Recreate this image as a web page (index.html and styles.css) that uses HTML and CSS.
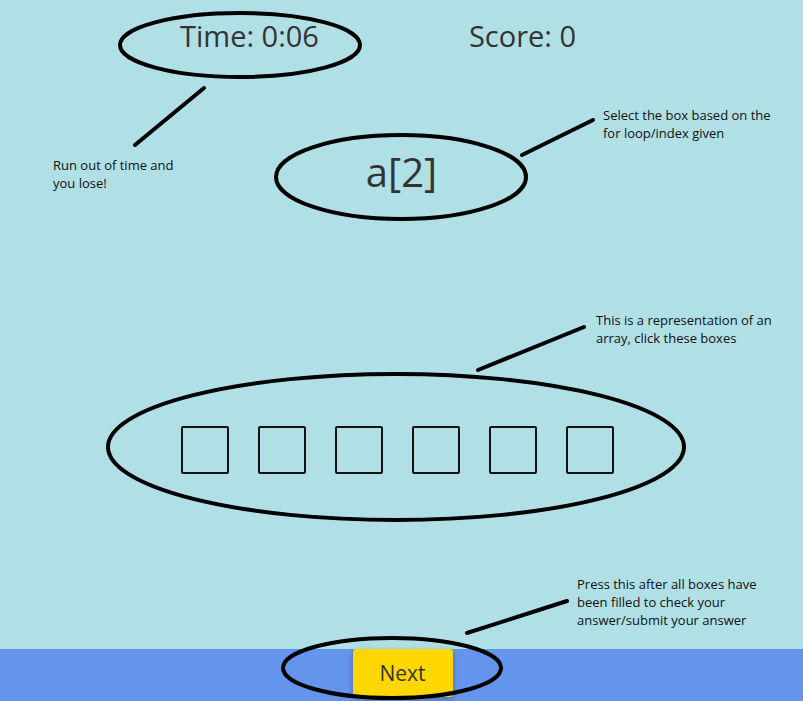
FILE: index.html
```html
<!DOCTYPE html>
<html lang="en">
<head>
    <meta charset="UTF-8">
    <meta name="viewport" content="width=device-width, initial-scale=1.0">
    <title>Array Game</title>
    <link rel="stylesheet" href="styles.css">
</head>
<body>
    <div class="page">
        <header class="stats">
            <div class="stat">Time: 0:06</div>
            <div class="stat">Score: 0</div>
        </header>

        <div class="question">a[2]</div>

        <div class="array">
            <div class="cell"></div>
            <div class="cell"></div>
            <div class="cell"></div>
            <div class="cell"></div>
            <div class="cell"></div>
            <div class="cell"></div>
        </div>

        <footer class="bar">
            <button class="next">Next</button>
        </footer>

        <!-- tutorial annotations drawn over the game -->
        <svg class="marks" width="803" height="701" viewBox="0 0 803 701">
            <g fill="none" stroke="#000" stroke-width="4" stroke-linecap="round">
                <ellipse cx="240" cy="45" rx="120" ry="32"/>
                <line x1="204" y1="88" x2="135" y2="145"/>
                <ellipse cx="401" cy="177" rx="125" ry="42"/>
                <line x1="522" y1="155" x2="593" y2="120"/>
                <ellipse cx="396" cy="447" rx="288" ry="73"/>
                <line x1="478" y1="370" x2="584" y2="327"/>
                <ellipse cx="392" cy="668" rx="109" ry="30"/>
                <line x1="467" y1="633" x2="567" y2="601"/>
            </g>
        </svg>
        <p class="note note-time">Run out of time and<br>you lose!</p>
        <p class="note note-index">Select the box based on the<br>for loop/index given</p>
        <p class="note note-array">This is a representation of an<br>array, click these boxes</p>
        <p class="note note-next">Press this after all boxes have<br>been filled to check your<br>answer/submit your answer</p>
    </div>
</body>
</html>
```

FILE: styles.css
```css
body {
    margin: 0;
    background-color: #b0e0e6;
    font-family: "Open Sans", "Noto Sans", sans-serif;
    color: #333;
}
.page {
    position: relative;
    width: 803px;
    height: 701px;
    overflow: hidden;
    display: flex;
    flex-direction: column;
}
.stats {
    display: flex;
    gap: 150px;
    padding-left: 180px;
    padding-top: 16px;
    height: 60px;
}
.stat {
    font-size: 29px;
    line-height: 40px;
}
.question {
    text-align: center;
    font-size: 40px;
    line-height: 60px;
    margin-top: 66px;
}
.array {
    display: flex;
    gap: 29px;
    padding-left: 181px;
    margin-top: 224px;
}
.cell {
    width: 44px;
    height: 44px;
    border: 2px solid #111;
    border-radius: 2px;
}
.bar {
    margin-top: auto;
    height: 52px;
    background-color: #6495ed;
    display: flex;
    justify-content: center;
    padding-left: 2px;
}
.next {
    width: 100px;
    height: 48px;
    border: none;
    border-radius: 3px;
    background-color: #ffd700;
    color: #333;
    font-family: "Open Sans", "Noto Sans", sans-serif;
    font-size: 21px;
    box-shadow: 0 2px 6px rgba(0, 0, 0, 0.25);
    cursor: pointer;
}
.marks {
    position: absolute;
    left: 0;
    top: 0;
    pointer-events: none;
}
.note {
    position: absolute;
    margin: 0;
    font-family: "Open Sans", sans-serif;
    font-size: 13px;
    line-height: 18px;
    color: #111;
}
.note-time {
    left: 53px;
    top: 156px;
}
.note-index {
    left: 603px;
    top: 106px;
}
.note-array {
    left: 596px;
    top: 311px;
}
.note-next {
    left: 577px;
    top: 575px;
}
```
